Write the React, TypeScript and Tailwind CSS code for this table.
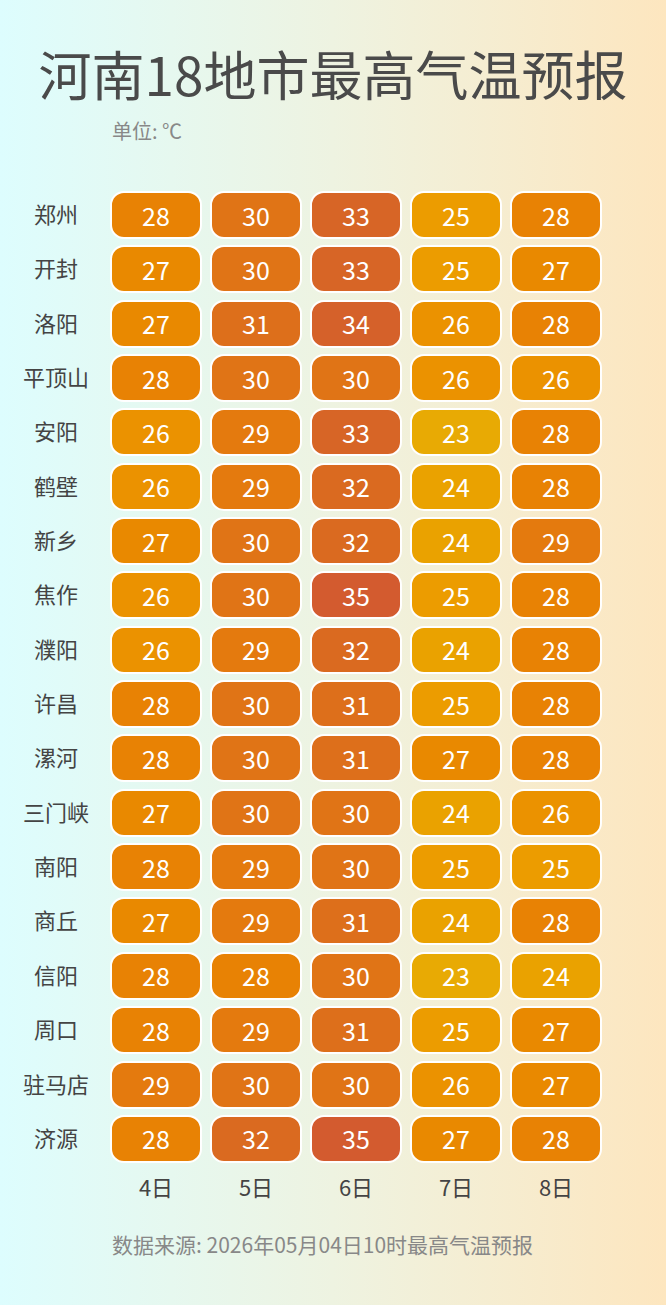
const FONT = { fontFamily: '"Noto Sans CJK SC", "Noto Sans", sans-serif' }

const rows: [string, number[]][] = [
  ["郑州", [28, 30, 33, 25, 28]],
  ["开封", [27, 30, 33, 25, 27]],
  ["洛阳", [27, 31, 34, 26, 28]],
  ["平顶山", [28, 30, 30, 26, 26]],
  ["安阳", [26, 29, 33, 23, 28]],
  ["鹤壁", [26, 29, 32, 24, 28]],
  ["新乡", [27, 30, 32, 24, 29]],
  ["焦作", [26, 30, 35, 25, 28]],
  ["濮阳", [26, 29, 32, 24, 28]],
  ["许昌", [28, 30, 31, 25, 28]],
  ["漯河", [28, 30, 31, 27, 28]],
  ["三门峡", [27, 30, 30, 24, 26]],
  ["南阳", [28, 29, 30, 25, 25]],
  ["商丘", [27, 29, 31, 24, 28]],
  ["信阳", [28, 28, 30, 23, 24]],
  ["周口", [28, 29, 31, 25, 27]],
  ["驻马店", [29, 30, 30, 26, 27]],
  ["济源", [28, 32, 35, 27, 28]],
]

const days = ["4日", "5日", "6日", "7日", "8日"]

// colour scale by temperature
const tempColor: Record<number, string> = {
  23: "bg-[#e8aa04]",
  24: "bg-[#eaa200]",
  25: "bg-[#ec9c00]",
  26: "bg-[#eb9200]",
  27: "bg-[#e98900]",
  28: "bg-[#e88204]",
  29: "bg-[#e47a0e]",
  30: "bg-[#e07416]",
  31: "bg-[#dd6f1b]",
  32: "bg-[#da6a20]",
  33: "bg-[#d76526]",
  34: "bg-[#d5612a]",
  35: "bg-[#d35b2f]",
}

function Cell({ t }: { t: number }) {
  return (
    <div
      className={`w-[92px] h-[48px] rounded-[14px] border-2 border-white flex items-center justify-center text-white text-[25px] leading-none ${tempColor[t]}`}
    >
      {t}
    </div>
  )
}

export default function App() {
  return (
    <div
      className="w-[666px] h-[1305px] bg-gradient-to-r from-[#ddfdfe] via-[#eef3e1] to-[#fde6bf] overflow-hidden"
      style={FONT}
    >
      <h1 className="pt-[47px] text-center text-[53px] leading-[53px] text-[#4a4a4a] font-normal">
        河南18地市最高气温预报
      </h1>
      <div className="mt-[19px] pl-[112px] text-[20px] leading-[24px] text-[#888888]">单位: ℃</div>

      <div className="mt-[48px] flex flex-col gap-[6.35px] pl-[12px]">
        {rows.map(([city, temps]) => (
          <div key={city} className="flex items-center h-[48px]">
            <div className="w-[88px] pb-[4px] text-center text-[22px] leading-none text-[#444444]">{city}</div>
            <div className="ml-[10px] flex gap-[8px]">
              {temps.map((t, i) => (
                <Cell key={i} t={t} />
              ))}
            </div>
          </div>
        ))}
      </div>

      <div className="mt-[10px] flex pl-[110px] gap-[8px]">
        {days.map((d) => (
          <div key={d} className="w-[92px] text-center text-[22px] leading-[26px] text-[#444444]">
            {d}
          </div>
        ))}
      </div>

      <div className="mt-[32px] pl-[112px] text-[21px] leading-[26px] text-[#888888]">
        数据来源: 2026年05月04日10时最高气温预报
      </div>
    </div>
  )
}
